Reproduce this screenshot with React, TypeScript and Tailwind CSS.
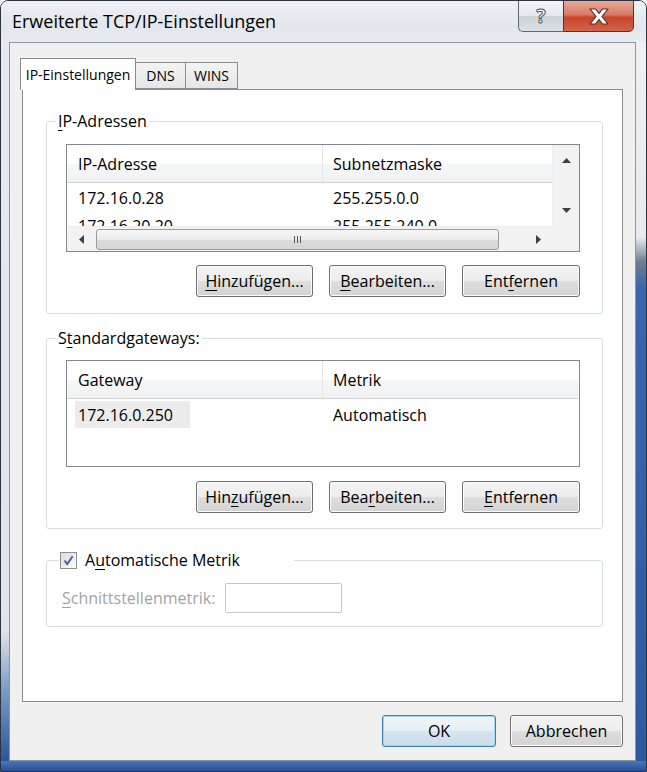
import React from "react"

const K = ({ children }: { children: React.ReactNode }) => (
    <span className="underline decoration-1 underline-offset-[3px]">{children}</span>
)

const Arrow = ({ dir }: { dir: "up" | "down" | "left" | "right" }) => {
    const vertical = dir === "up" || dir === "down"
    const pts = {
        up: "0,5 4.5,0 9,5",
        down: "0,0 9,0 4.5,5",
        left: "5,0 5,9 0,4.5",
        right: "0,0 0,9 5,4.5",
    }[dir]
    return (
        <svg width={vertical ? 9 : 5} height={vertical ? 5 : 9} viewBox={vertical ? "0 0 9 5" : "0 0 5 9"}>
            <polygon points={pts} fill="#3f3f3f" />
        </svg>
    )
}

const Button = ({ children, primary = false, w = "w-[117px]" }: { children: React.ReactNode; primary?: boolean; w?: string }) => (
    <button
        className={
            primary
                ? `${w} h-[32px] rounded-[3px] border border-[#3c7fb1] bg-[linear-gradient(to_bottom,#f1f6fa_0%,#e6eef5_50%,#d6e5f0_51%,#cbdde9_100%)] shadow-[inset_0_0_0_1px_#9fd7f5] text-[16px] text-black`
                : `${w} h-[32px] rounded-[3px] border border-[#707070] bg-[linear-gradient(to_bottom,#f4f4f4_0%,#ececec_50%,#dedede_51%,#d3d3d3_100%)] shadow-[inset_0_0_0_1px_#fbfbfb] text-[16px] text-black`
        }
    >
        {children}
    </button>
)

const HeaderRow = ({ a, b }: { a: string; b: string }) => (
    <div className="flex h-[38px] shrink-0 items-center border-b border-[#d5d5d5] bg-[linear-gradient(to_bottom,#ffffff_0%,#ffffff_50%,#f5f6f7_51%,#f1f2f4_100%)]">
        <div className="flex h-full w-[256px] items-center border-r border-[#e3e4e6] pl-[11px]">{a}</div>
        <div className="pl-[10px]">{b}</div>
    </div>
)

const IpList = () => (
    <div className="flex h-[108px] flex-col border border-[#828790] bg-white">
        <div className="flex min-h-0 flex-1">
            <div className="flex min-w-0 flex-1 flex-col overflow-hidden">
                <HeaderRow a="IP-Adresse" b="Subnetzmaske" />
                <div className="mt-[3px] flex h-[24px] shrink-0 items-center">
                    <div className="w-[256px] pl-[11px]">172.16.0.28</div>
                    <div className="pl-[10px]">255.255.0.0</div>
                </div>
                <div className="mt-[4px] flex h-[24px] shrink-0 items-center">
                    <div className="w-[256px] pl-[11px]">172.16.20.20</div>
                    <div className="pl-[10px]">255.255.240.0</div>
                </div>
            </div>
            <div className="flex w-[27px] flex-col items-center justify-between border-l border-[#ececec] bg-[#f2f2f2] py-[13px]">
                <Arrow dir="up" />
                <Arrow dir="down" />
            </div>
        </div>
        <div className="flex h-[25px] shrink-0">
            <div className="flex flex-1 items-center border-t border-[#ececec] bg-[#f2f2f2]">
                <div className="flex w-[29px] justify-center">
                    <Arrow dir="left" />
                </div>
                <div className="flex h-[21px] w-[403px] items-center justify-center rounded-[3px] border border-[#9b9b9b] bg-[linear-gradient(to_bottom,#f7f7f7_0%,#ececec_50%,#dcdcdc_51%,#d6d6d6_100%)]">
                    <div className="flex gap-[2px]">
                        <div className="h-[7px] w-px bg-[#555]" />
                        <div className="h-[7px] w-px bg-[#555]" />
                        <div className="h-[7px] w-px bg-[#555]" />
                    </div>
                </div>
                <div className="flex flex-1 justify-end pr-[11px]">
                    <Arrow dir="right" />
                </div>
            </div>
            <div className="w-[27px] bg-[#f2f2f2]" />
        </div>
    </div>
)

const GatewayList = () => (
    <div className="flex h-[107px] flex-col border border-[#828790] bg-white pr-px">
        <HeaderRow a="Gateway" b="Metrik" />
        <div className="mt-[2px] flex h-[27px] items-center">
            <div className="w-[256px] pl-[8px]">
                <div className="flex h-[27px] w-[115px] items-center bg-[#ececec] pl-[3px]">172.16.0.250</div>
            </div>
            <div className="pl-[10px]">Automatisch</div>
        </div>
    </div>
)

const ButtonRow = ({ second }: { second?: boolean }) => (
    <div className="flex justify-end gap-[16px]">
        <Button>
            {second ? <>Hin<K>z</K>ufügen...</> : <><K>H</K>inzufügen...</>}
        </Button>
        <Button>
            {second ? <>Bea<K>r</K>beiten...</> : <><K>B</K>earbeiten...</>}
        </Button>
        <Button w="w-[118px]">
            {second ? <><K>E</K>ntfernen</> : <>Ent<K>f</K>ernen</>}
        </Button>
    </div>
)

const Group = ({ legend, children, className = "" }: { legend: React.ReactNode; children: React.ReactNode; className?: string }) => (
    <fieldset className={`rounded-[3px] border border-[#d5dfe5] ${className}`}>
        <legend className="ml-[9px] px-[2px] leading-[20px]">{legend}</legend>
        {children}
    </fieldset>
)

export default function App() {
    return (
        <div className="flex h-[772px] w-[647px] flex-col overflow-hidden rounded-t-[8px] border border-[#2a3442] bg-[linear-gradient(to_bottom,#e9edf1,#dfe4e9)] font-['Open_Sans',sans-serif] text-[16px] text-black">
            {/* title bar */}
            <div className="flex h-[41px] shrink-0 items-start justify-between bg-[linear-gradient(to_bottom,#eef1f4_0%,#e2e7ec_60%,#e7ebef_100%)]">
                <div className="pl-[11px] pt-[8px] text-[18px] leading-[24px]">Erweiterte TCP/IP-Einstellungen</div>
                <div className="-mt-px mr-[12px] flex h-[32px]">
                    <div className="flex w-[45px] items-center justify-center rounded-bl-[5px] border border-r-0 border-[#5f6670] bg-[linear-gradient(to_bottom,#f3f5f7_0%,#e4e8ec_50%,#ccd3da_51%,#d9dfe5_100%)]">
                        <span className="text-[19px] font-bold leading-none text-white [-webkit-text-stroke:1px_#4a4f57]">?</span>
                    </div>
                    <div className="flex w-[71px] items-center justify-center rounded-br-[5px] border border-[#6b2a22] bg-[linear-gradient(to_bottom,#e9a99a_0%,#d97a65_45%,#c8442d_55%,#d2634a_100%)]">
                        <svg width="22" height="17" viewBox="0 0 22 17">
                            <path
                                d="M2 1 L7.5 1 L11 5.5 L14.5 1 L20 1 L14 8.5 L20 16 L14.5 16 L11 11.5 L7.5 16 L2 16 L8 8.5 Z"
                                fill="#ffffff"
                                stroke="#5b2a22"
                                strokeWidth="1.2"
                                strokeLinejoin="round"
                            />
                        </svg>
                    </div>
                </div>
            </div>

            <div className="flex min-h-0 flex-1">
                {/* left glass */}
                <div className="w-[8px] bg-[linear-gradient(to_bottom,#e6eaee_0%,#dfe4e9_82%,#7f9bc4_90%,#2b559b_100%)]" />

                {/* client */}
                <div className="flex w-[627px] flex-col border border-[#8b95a1] bg-[#f0f0f0] px-[12px] pb-[13px] pt-[15px]">
                    {/* tabs */}
                    <div className="relative z-10 -mb-px -ml-[2px] flex items-end text-[14px]">
                        <div className="flex h-[32px] w-[116px] items-center justify-center border border-b-0 border-[#898c95] bg-white">
                            IP-Einstellungen
                        </div>
                        <div className="mb-px flex h-[27px] w-[50px] items-center justify-center border border-l-0 border-[#898c95] bg-[linear-gradient(to_bottom,#f3f3f3,#e6e6e6)]">
                            DNS
                        </div>
                        <div className="mb-px flex h-[27px] w-[52px] items-center justify-center border border-l-0 border-[#898c95] bg-[linear-gradient(to_bottom,#f3f3f3,#e6e6e6)]">
                            WINS
                        </div>
                    </div>

                    {/* panel */}
                    <div className="flex flex-1 flex-col border border-[#898c95] bg-white pl-[23px] pr-[19px] pt-[21px]">
                        <Group legend={<><K>I</K>P-Adressen</>}>
                            <div className="pb-[16px] pl-[19px] pr-[22px] pt-[13px]">
                                <IpList />
                                <div className="mt-[13px]">
                                    <ButtonRow />
                                </div>
                            </div>
                        </Group>

                        <Group legend={<>S<K>t</K>andardgateways:</>} className="mt-[14px]">
                            <div className="pb-[15px] pl-[19px] pr-[22px] pt-[12px]">
                                <GatewayList />
                                <div className="mt-[14px]">
                                    <ButtonRow second />
                                </div>
                            </div>
                        </Group>

                        <fieldset className="mt-[20px] rounded-[3px] border border-[#d5dfe5]">
                            <legend className="ml-[12px] w-[235px] pl-px">
                                <span className="flex h-[22px] items-center gap-[8px]">
                                    <span className="flex h-[17px] w-[17px] items-center justify-center border border-[#8e8f8f] bg-[linear-gradient(to_bottom_right,#dcdcdc,#fbfbfb)]">
                                        <svg width="11" height="11" viewBox="0 0 11 11">
                                            <path d="M1.5 5.5 L4.2 9 L9.6 1.2" fill="none" stroke="#4a5f97" strokeWidth="2" />
                                        </svg>
                                    </span>
                                    <span>
                                        A<K>u</K>tomatische Metrik
                                    </span>
                                </span>
                            </legend>
                            <div className="flex items-center pb-[13px] pl-[15px] pt-[12px]">
                                <span className="w-[163px] text-[#a3a3a3]">
                                    <K>S</K>chnittstellenmetrik:
                                </span>
                                <div className="h-[30px] w-[117px] rounded-[2px] border border-[#c6c6c6] bg-white" />
                            </div>
                        </fieldset>
                    </div>

                    {/* dialog buttons */}
                    <div className="mt-[13px] flex justify-end gap-[14px]">
                        <Button primary w="w-[114px]">
                            OK
                        </Button>
                        <Button w="w-[113px]">Abbrechen</Button>
                    </div>
                </div>

                {/* right glass */}
                <div className="w-[10px] bg-[linear-gradient(to_bottom,#eef0f2_0px,#e8ebee_195px,#6f7d92_220px,#3a66ad_245px,#2f5aa0_100%)]" />
            </div>

            {/* bottom glass */}
            <div className="h-[10px] shrink-0 bg-[linear-gradient(to_bottom,#4e77b7,#274f95)]" />
        </div>
    )
}
